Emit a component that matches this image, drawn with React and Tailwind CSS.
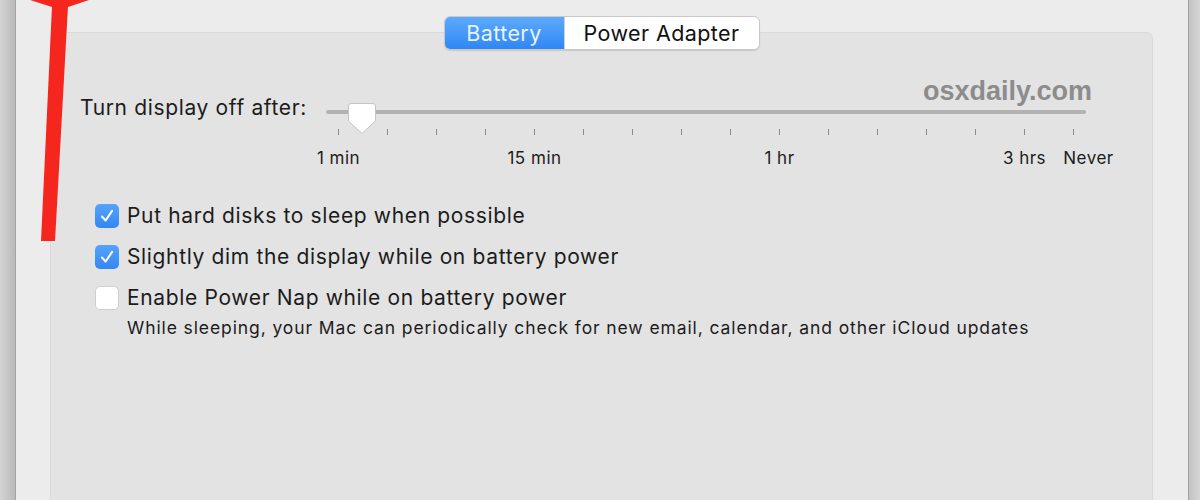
import React from "react";

const font = { fontFamily: "Inter, 'Helvetica Neue', 'Liberation Sans', sans-serif" };

function Checkbox({ checked }) {
  if (checked) {
    return (
      <div className="flex h-[24px] w-[24px] shrink-0 items-center justify-center rounded-[5px] bg-gradient-to-b from-[#57a3fa] to-[#3287f3]">
        <svg width="18" height="18" viewBox="0 0 16 16">
          <path d="M3.5 8.5 L6.8 12 L12.5 3.5" fill="none" stroke="#fff" strokeWidth="1.8" strokeLinecap="round" strokeLinejoin="round" />
        </svg>
      </div>
    );
  }
  return <div className="h-[24px] w-[24px] shrink-0 rounded-[5px] border border-[#cfcfcf] bg-white" />;
}

function Option({ checked, label }) {
  return (
    <div className="flex h-[41px] items-center gap-[8px] pl-[15px]">
      <Checkbox checked={checked} />
      <span className="text-[21px] tracking-[0.65px] text-[#1c1c1c]">{label}</span>
    </div>
  );
}

function DisplaySlider() {
  const ticks = Array.from({ length: 16 });
  const labels = { 0: "1 min", 4: "15 min", 9: "1 hr", 14: "3 hrs" };

  return (
    <div className="relative w-[790px]">
      <div className="ml-[12px] mt-[16px] h-[4px] w-[760px] rounded-full bg-[#b3b3b3]" />

      {/* thumb */}
      <svg className="absolute left-[33px] top-[8px]" width="30" height="33" viewBox="0 0 30 33">
        <path d="M4 1.5 H26 Q28.5 1.5 28.5 4 V19 L15 31.5 L1.5 19 V4 Q1.5 1.5 4 1.5 Z" fill="#fff" stroke="#c4c4c4" strokeWidth="1" />
      </svg>

      <div className="mt-[15px] grid grid-cols-[repeat(16,49px)]">
        {ticks.map((_, i) => (
          <div key={i} className="flex justify-center">
            <div className="h-[6px] w-px bg-[#8a8a8a]" />
          </div>
        ))}
      </div>

      <div className="mt-[12px] grid grid-cols-[repeat(16,49px)] text-[17px] leading-[22px] tracking-[0.5px] text-[#1c1c1c]">
        {ticks.map((_, i) => (
          <div key={i} className="flex justify-center whitespace-nowrap">
            {labels[i] && <span>{labels[i]}</span>}
            {i === 15 && <span className="ml-[30px]">Never</span>}
          </div>
        ))}
      </div>

      <div className="absolute right-[12px] top-[-23px] text-[27px] font-bold text-[#8c8c8c]" style={{ fontFamily: "'Liberation Sans', Arial, sans-serif" }}>
        osxdaily.com
      </div>
    </div>
  );
}

export default function App() {
  return (
    <div className="relative flex h-[500px] w-[1200px] overflow-hidden" style={font}>
      <div className="w-[15px] bg-gradient-to-r from-[#d4d4d4] to-[#b9b9b9]" />

      <div className="flex flex-1 flex-col border-x border-[#a3a3a3] bg-[#ececec] pl-[34px] pr-[35px] pt-[32px]">
        <div className="flex flex-1 flex-col rounded-t-[7px] border border-b-0 border-[#d9d9d9] bg-[#e3e3e3] pl-[29px]">
          <div className="-mt-[17px] mr-[29px] flex justify-center">
            <div className="flex h-[34px] overflow-hidden rounded-[6px] border border-[#c9c9c9] bg-white text-[21.5px] tracking-[0.4px] shadow-[0_1px_1px_rgba(0,0,0,0.12)]">
              <div className="flex w-[119px] items-center justify-center bg-gradient-to-b from-[#5daafb] to-[#2f86f4] text-[#e8f2ff]">
                Battery
              </div>
              <div className="flex w-[195px] items-center justify-center border-l border-[#d0d0d0] text-[#111]">
                Power Adapter
              </div>
            </div>
          </div>

          <div className="mt-[44px] flex items-start">
            <div className="h-[28px] w-[234px] whitespace-nowrap text-[21px] leading-[28px] tracking-[0.65px] text-[#1c1c1c]">Turn display off after:</div>
            <DisplaySlider />
          </div>

          <div className="mt-[26px] flex flex-col">
            <Option checked label="Put hard disks to sleep when possible" />
            <Option checked label="Slightly dim the display while on battery power" />
            <Option checked={false} label="Enable Power Nap while on battery power" />
            <div className="-mt-[1px] pl-[47px] text-[17.5px] leading-[22px] tracking-[0.9px] text-[#1c1c1c]">
              While sleeping, your Mac can periodically check for new email, calendar, and other iCloud updates
            </div>
          </div>
        </div>
      </div>

      <div className="w-[11px] bg-gradient-to-r from-[#c2c2c2] to-[#d6d6d6]" />

      {/* red annotation arrow */}
      <svg className="absolute left-0 top-0" width="100" height="250" viewBox="0 0 100 250">
        <polygon points="27,-1 92,-1 68,7 52,7" fill="#f4261d" />
        <polygon points="52,6 68,6 55,241 41,241" fill="#f4261d" />
      </svg>
    </div>
  );
}
